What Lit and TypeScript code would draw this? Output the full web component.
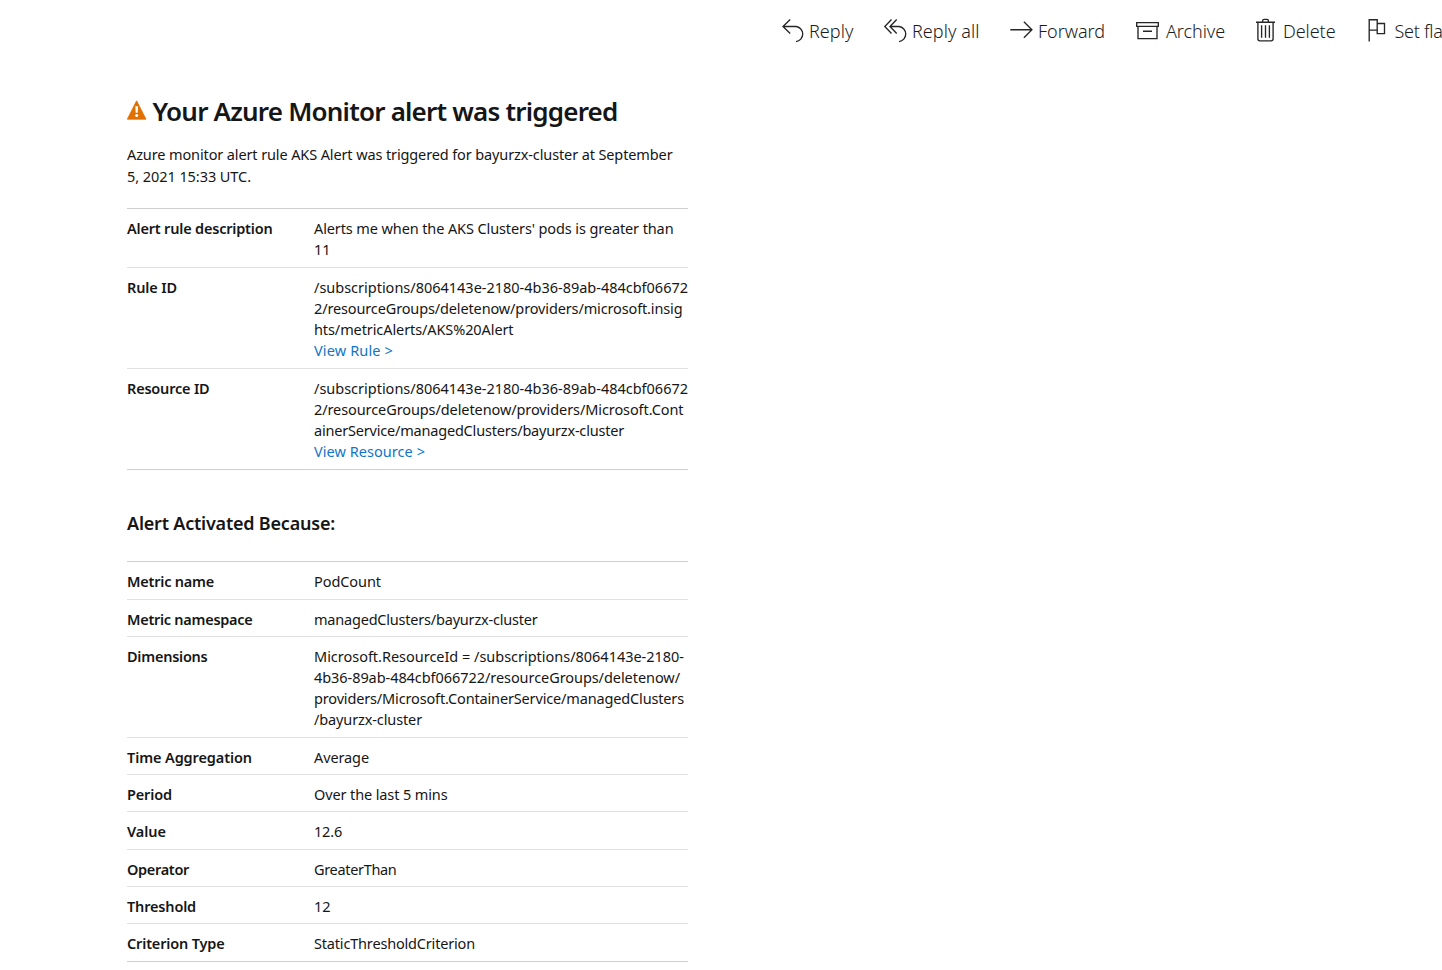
import { LitElement, html, css, svg } from "lit";
import { customElement, property } from "lit/decorators.js";

/** One line of text whose tracking is adjusted so that it fills a given measure. */
@customElement("fit-text")
class FitText extends LitElement {
  @property() text = "";
  @property({ type: Number }) measure = 0;

  static styles = css`
    :host { display: block; white-space: pre; }
    .run { display: inline-block; }
  `;

  updated() {
    const run = this.renderRoot.querySelector(".run") as HTMLElement;
    run.style.letterSpacing = "0px";
    const natural = run.getBoundingClientRect().width;
    run.style.letterSpacing = `${(this.measure - natural) / this.text.length}px`;
  }

  render() {
    return html`<span class="run">${this.text}</span>`;
  }
}

type Line = [string, number];
interface Row { label: Line; lines: Line[]; link?: Line; }

const summary: Row[] = [
  {
    label: ["Alert rule description", 145.5],
    lines: [["Alerts me when the AKS Clusters' pods is greater than", 359.5], ["11", 16.5]],
  },
  {
    label: ["Rule ID", 50],
    lines: [
      ["/subscriptions/8064143e-2180-4b36-89ab-484cbf06672", 374],
      ["2/resourceGroups/deletenow/providers/microsoft.insig", 368.5],
      ["hts/metricAlerts/AKS%20Alert", 199.5],
    ],
    link: ["View Rule >", 79],
  },
  {
    label: ["Resource ID", 82.5],
    lines: [
      ["/subscriptions/8064143e-2180-4b36-89ab-484cbf06672", 374],
      ["2/resourceGroups/deletenow/providers/Microsoft.Cont", 369.5],
      ["ainerService/managedClusters/bayurzx-cluster", 310],
    ],
    link: ["View Resource >", 111],
  },
];

const details: Row[] = [
  { label: ["Metric name", 87], lines: [["PodCount", 67]] },
  { label: ["Metric namespace", 125.5], lines: [["managedClusters/bayurzx-cluster", 223.5]] },
  {
    label: ["Dimensions", 80.5],
    lines: [
      ["Microsoft.ResourceId = /subscriptions/8064143e-2180-", 370],
      ["4b36-89ab-484cbf066722/resourceGroups/deletenow/", 366],
      ["providers/Microsoft.ContainerService/managedClusters", 370],
      ["/bayurzx-cluster", 108],
    ],
  },
  { label: ["Time Aggregation", 125], lines: [["Average", 55]] },
  { label: ["Period", 45], lines: [["Over the last 5 mins", 133.5]] },
  { label: ["Value", 39], lines: [["12.6", 28]] },
  { label: ["Operator", 62], lines: [["GreaterThan", 82.5]] },
  { label: ["Threshold", 69], lines: [["12", 16.5]] },
  { label: ["Criterion Type", 97.5], lines: [["StaticThresholdCriterion", 161]] },
];

const icons = {
  reply: svg`<path d="M8.2 1.5 1 8.5l7.2 7M1 8.5H14a7.6 7.6 0 0 1 0 15.1"/>`,
  replyAll: svg`<path d="M7.5 1.5.8 8.5l6.7 7M12.7 1.5 6 8.5l6.7 7M6 8.5h9a7.6 7.6 0 0 1 0 15.1"/>`,
  forward: svg`<path d="M.3 11.7h21.6M13.9 3.7l8 8-8 8"/>`,
  archive: svg`<path d="M.7 4.6h21.6v3.7H.7zM2 8.3v12.3h19V8.3M7 13.2h9"/>`,
  trash: svg`<path d="M0 4.2h19M1.9 4.2v16.6a2 2 0 0 0 2 2h11.2a2 2 0 0 0 2-2V4.2M6.6 4V2.9a1.6 1.6 0 0 1 1.6-1.6h2.6a1.6 1.6 0 0 1 1.6 1.6V4M5.6 7.3v12.4M9.5 7.3v12.4M13.4 7.3v12.4"/>`,
  flag: svg`<path d="M1.2 23.6V1.7h8v10.4h-8M9.2 5.5h7.3v10.1H9.2v-3.5"/>`,
};

@customElement("app-root")
class AppRoot extends LitElement {
  static styles = css`
    :host {
      display: block;
      height: 970px;
      overflow: hidden;
      background: #fff;
      color: #161616;
      font-family: "Noto Sans", "Open Sans", sans-serif;
    }
    .toolbar {
      display: flex;
      align-items: flex-start;
      height: 61px;
      padding-left: 782px;
      overflow: hidden;
      box-sizing: border-box;
      color: #1c1c1c;
      font-size: 18px;
      font-weight: 340;
      line-height: 24px;
    }
    .action { display: flex; flex: none; padding-top: 18px; }
    .icon {
      flex: none;
      height: 24px;
      fill: none;
      stroke: #262626;
      stroke-width: 1.35;
      overflow: visible;
    }
    .caption { padding-top: 1px; }
    .mail { width: 561px; margin-left: 127px; padding-top: 33px; }
    .heading { display: flex; gap: 5.5px; height: 36px; }
    .warn { width: 20px; height: 20px; margin-top: 6px; }
    .title { font-size: 26px; font-weight: 600; line-height: 35px; }
    .intro { margin-top: 13px; font-size: 14.5px; line-height: 22px; }
    .table { border-bottom: 1px solid #cfcfcf; }
    .summary { margin-top: 21px; }
    .details { margin-top: 25px; }
    .row {
      display: grid;
      grid-template-columns: 187px 374px;
      padding: 9px 0 7px;
      border-top: 1px solid #e1e1e1;
      font-size: 14.5px;
      line-height: 21px;
    }
    .row.single { padding-bottom: 6px; }
    .row.single:nth-child(3n):not(:nth-child(3)),
    .row.single:first-child { padding-bottom: 7px; }
    .row:first-child { border-top-color: #cfcfcf; }
    .label { font-weight: 600; }
    .link { color: #0f76c6; }
    .subtitle { margin-top: 41px; font-size: 18px; font-weight: 600; line-height: 25px; }
  `;

  private action(icon: unknown, iconWidth: number, gap: number, line: Line, after: number) {
    return html`<div class="action" style="gap:${gap}px;margin-right:${after}px">
      <svg class="icon" width=${iconWidth} viewBox="0 0 ${iconWidth} 24">${icon}</svg>
      <fit-text class="caption" .text=${line[0]} .measure=${line[1]}></fit-text>
    </div>`;
  }

  private line([text, measure]: Line) {
    return html`<fit-text .text=${text} .measure=${measure}></fit-text>`;
  }

  private table(rows: Row[], name: string) {
    return html`<div class="table ${name}">
      ${rows.map(
        (r) => html`<div class="row ${r.lines.length === 1 ? "single" : ""}">
          <div class="label">${this.line(r.label)}</div>
          <div>
            ${r.lines.map((l) => this.line(l))}
            ${r.link ? html`<div class="link">${this.line(r.link)}</div>` : null}
          </div>
        </div>`
      )}
    </div>`;
  }

  render() {
    return html`
      <div class="toolbar">
        ${this.action(icons.reply, 22, 5, ["Reply", 44.5], 30.5)}
        ${this.action(icons.replyAll, 23, 5, ["Reply all", 67.5], 30.5)}
        ${this.action(icons.forward, 23, 5, ["Forward", 67], 31)}
        ${this.action(icons.archive, 23, 7, ["Archive", 59], 31)}
        ${this.action(icons.trash, 19, 8, ["Delete", 52.5], 32.5)}
        ${this.action(icons.flag, 17, 9.5, ["Set fla", 48], 0)}
      </div>
      <div class="mail">
        <div class="heading">
          <svg class="warn" viewBox="0 0 20 20">
            <path d="M9.6.8 19 19.2H.3z" fill="#e07000" stroke="#e07000" stroke-width=".8" stroke-linejoin="round" />
            <path d="M8.3 6.3h2.8l-.4 6.4h-2z" fill="#fff" />
            <circle cx="9.7" cy="15.5" r="1.5" fill="#fff" />
          </svg>
          <fit-text class="title" .text=${"Your Azure Monitor alert was triggered"} .measure=${465}></fit-text>
        </div>
        <div class="intro">
          ${this.line(["Azure monitor alert rule AKS Alert was triggered for bayurzx-cluster at September", 545.5])}
          ${this.line(["5, 2021 15:33 UTC.", 124])}
        </div>
        ${this.table(summary, "summary")}
        <div class="subtitle">${this.line(["Alert Activated Because:", 208])}</div>
        ${this.table(details, "details")}
      </div>
    `;
  }
}
